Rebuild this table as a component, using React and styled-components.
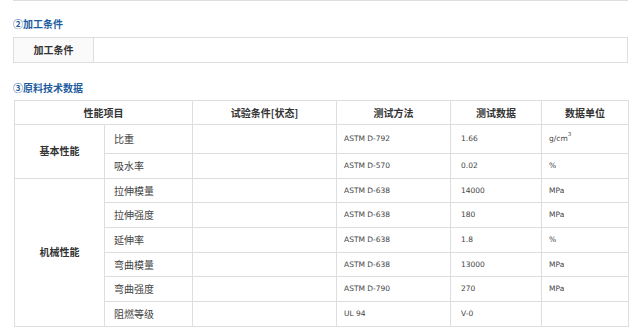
import React from 'react';
import styled, { createGlobalStyle } from 'styled-components';

const GlobalStyle = createGlobalStyle`
  html, body {
    margin: 0;
    padding: 0;
    background: #fff;
  }
  body {
    font-family: "Liberation Sans", "Noto Sans CJK SC", sans-serif;
    color: #333;
  }
`;

const Page = styled.div`
  width: 615px;
  margin-left: 13px;
  border-top: 1px solid #dedede;
  padding-top: 16px;
`;

const Heading = styled.h3`
  margin: 0 0 ${(p) => p.$mb ?? 6}px;
  font-family: "Noto Sans CJK SC", sans-serif;
  font-size: 10px;
  line-height: 14px;
  font-weight: 700;
  color: #1d5c9e;
`;

const Table = styled.table`
  width: ${(p) => p.$width || 615}px;
  margin-left: ${(p) => p.$offset || 0}px;
  border-collapse: collapse;
  table-layout: fixed;
  margin-bottom: ${(p) => p.$gap || 0}px;
`;

const Row = styled.tr`
  height: ${(p) => p.$h || 24.7}px;
`;

const Cell = styled.td`
  border: 1px solid #dedede;
  padding: 0 0 0 ${(p) => p.$pad ?? 8}px;
  vertical-align: middle;
  text-align: ${(p) => (p.$center ? 'center' : 'left')};
  background: ${(p) => p.$bg || '#fff'};
  font-family: ${(p) =>
    p.$latin
      ? '"DejaVu Sans", sans-serif'
      : '"Noto Sans CJK SC", sans-serif'};
  font-size: ${(p) => (p.$latin ? 7.5 : 10)}px;
  line-height: 12px;
  font-weight: ${(p) => (p.$bold ? 700 : 400)};
  color: ${(p) => (p.$bold ? '#333' : '#444')};
  white-space: nowrap;
`;

const HeadCell = styled.th`
  border: 1px solid #dedede;
  padding: 0;
  text-align: center;
  vertical-align: middle;
  background: #fff;
  font-family: "Noto Sans CJK SC", sans-serif;
  font-size: 10px;
  line-height: 12px;
  font-weight: 700;
  color: #333;
`;

const Sup = styled.sup`
  font-size: 5.5px;
  vertical-align: 5px;
  line-height: 0;
`;

const rows = [
  { group: '基本性能', span: 2, item: '比重', method: 'ASTM D-792', value: '1.66', unit: <>g/cm<Sup>3</Sup></>, h: 29 },
  { item: '吸水率', method: 'ASTM D-570', value: '0.02', unit: '%' },
  { group: '机械性能', span: 6, item: '拉伸模量', method: 'ASTM D-638', value: '14000', unit: 'MPa' },
  { item: '拉伸强度', method: 'ASTM D-638', value: '180', unit: 'MPa' },
  { item: '延伸率', method: 'ASTM D-638', value: '1.8', unit: '%' },
  { item: '弯曲模量', method: 'ASTM D-638', value: '13000', unit: 'MPa' },
  { item: '弯曲强度', method: 'ASTM D-790', value: '270', unit: 'MPa' },
  { item: '阻燃等级', method: 'UL 94', value: 'V-0', unit: '' },
];

export default function App() {
  return (
    <>
      <GlobalStyle />
      <Page>
        <Heading>②加工条件</Heading>
        <Table $gap={18}>
          <colgroup>
            <col style={{ width: 80 }} />
            <col />
          </colgroup>
          <tbody>
            <Row $h={25}>
              <Cell $center $bold $pad={0} $bg="#fafafa">加工条件</Cell>
              <Cell />
            </Row>
          </tbody>
        </Table>

        <Heading $mb={5}>③原料技术数据</Heading>
        <Table $width={614} $offset={1}>
          <colgroup>
            <col style={{ width: 90 }} />
            <col style={{ width: 88 }} />
            <col style={{ width: 144 }} />
            <col style={{ width: 114 }} />
            <col style={{ width: 91 }} />
            <col style={{ width: 87 }} />
          </colgroup>
          <thead>
            <Row $h={24}>
              <HeadCell colSpan={2}>性能项目</HeadCell>
              <HeadCell>试验条件[状态]</HeadCell>
              <HeadCell>测试方法</HeadCell>
              <HeadCell>测试数据</HeadCell>
              <HeadCell>数据单位</HeadCell>
            </Row>
          </thead>
          <tbody>
            {rows.map((r, i) => (
              <Row key={i} $h={r.h}>
                {r.group && (
                  <Cell rowSpan={r.span} $center $bold $pad={0}>
                    {r.group}
                  </Cell>
                )}
                <Cell $pad={9}>{r.item}</Cell>
                <Cell />
                <Cell $latin $pad={7}>{r.method}</Cell>
                <Cell $latin $pad={10}>{r.value}</Cell>
                <Cell $latin $pad={7}>{r.unit}</Cell>
              </Row>
            ))}
          </tbody>
        </Table>
      </Page>
    </>
  );
}
